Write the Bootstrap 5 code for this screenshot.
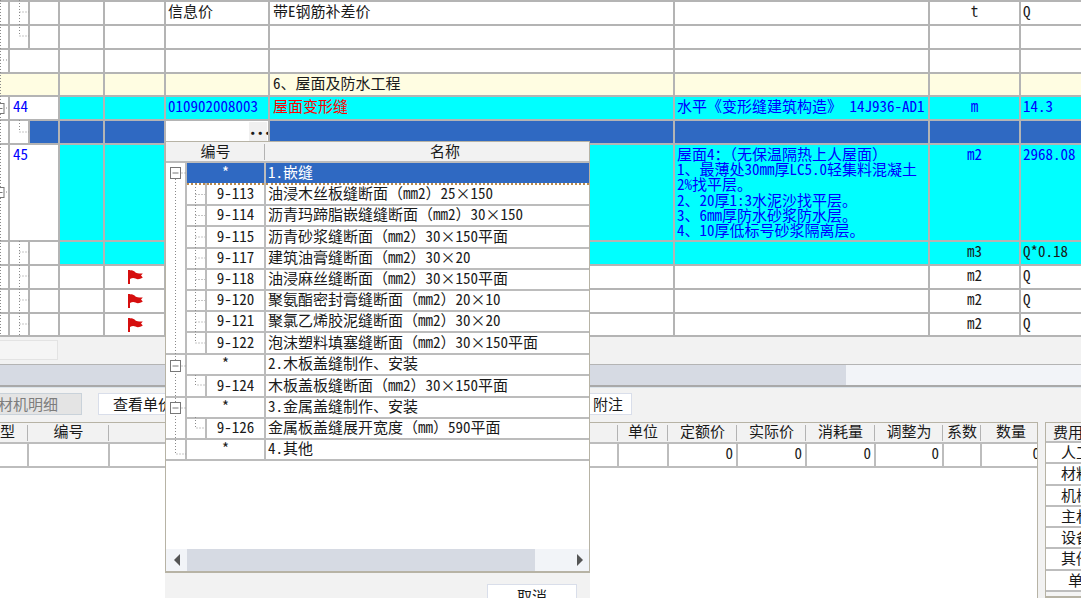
<!DOCTYPE html>
<html lang="zh">
<head>
<meta charset="utf-8">
<title>清单</title>
<link href="https://cdn.jsdelivr.net/npm/bootstrap@5.3.0/dist/css/bootstrap.min.css" rel="stylesheet">
<style>
html,body{margin:0;height:100%;overflow:hidden;background:#f2f2f2}
body{font-family:"Noto Sans CJK SC","Liberation Mono",monospace;font-size:15px;color:#1a1a1a;font-feature-settings:"hwid"}
.stage{position:relative;width:1081px;height:598px;overflow:hidden}
.fw{font-style:normal;font-feature-settings:"fwid"}
.sheet{table-layout:fixed;border-collapse:collapse;margin:0;--bs-table-bg:#fff;--bs-table-border-color:#b4b4b4;--bs-table-color:#1a1a1a;color:#1a1a1a}
.sheet>tbody>tr>td,.sheet>thead>tr>th{padding:0 2px 4px;line-height:18px;white-space:nowrap;overflow:hidden;font-weight:400;border:2px solid #b4b4b4;vertical-align:middle}
.main{width:1081px}
.main>tbody>tr{height:24px}
.main>tbody>tr.h23{height:23px}
.main>tbody>tr.h23>td{padding-bottom:3px}
.main>tbody>tr.tall{height:97px}
.main>tbody>tr>td:first-child{border-left:0}
.main>tbody>tr>td:last-child{border-right:0}
.main>tbody>tr>td.topped{vertical-align:top;padding-top:1px;padding-bottom:0;line-height:15.2px;white-space:pre-line}
.bg-c{--bs-table-bg:#00ffff}
.bg-s{--bs-table-bg:#2f69c2}
.bg-y{--bs-table-bg:#fffde2}
.tx-b{color:#0000ff!important}
.tx-r{color:#ff0000!important}
.nb{font-weight:600;padding-left:3px!important}
.pl{padding-left:3px!important}
.main>tbody>tr>td.inp{padding:0}
.browse{background:#f0f0f0;width:18px;height:20px;margin:0 1px 0 auto;font-weight:800;font-size:15px;line-height:14px;text-align:center}
.main>tbody>tr>td.flagc{padding:0}
.flagic{display:block;width:15px;height:14px;margin:0 0 0 23px}
.treeover{position:absolute;left:0;top:0;pointer-events:none}
.hscroll{height:27px;padding:3px 0 0}
.pager{width:58px;height:20px;background:#f5f5f5;border:1px solid #e3e3e3;border-left:0}
.bar{height:23px;background:#f2f4f8;border-top:1px solid #b4b4b4;border-bottom:2px solid #a9a9a9}
.thumb{width:846px;height:100%;background:#d6dae3}
.tools{height:35px;padding:5px 0 0;gap:16px;border-top:1px solid #dbe3ea}
.tbtn{height:22px;background:#fff;border:1px solid #d9deea;line-height:19px;padding:0 0 0 14px;white-space:nowrap}
.tbtn.off{width:85px;margin-left:-3px;background:#e4e4e4;color:#7d7d7d;border-color:#c9d2da;padding-left:0;overflow:hidden}
.tbtn.wide{width:90px;overflow:hidden}
.tbtn.note{width:92px;margin-left:336px;padding-left:52px}
.lower{height:178px}
.lowleft{width:1038px;height:100%;background:#fff;border-top:1px solid #b7b3a5;border-right:1px solid #b7b3a5;overflow:hidden}
.gap-7{width:7px}
.sheet.det{width:1037px;--bs-table-bg:#fff}
.det>tbody>tr>td{border:0;border-bottom:2px solid #bdbdbd;border-right:2px solid #bdbdbd;height:24px;padding:0 3px 4px 2px;text-align:right}
.det>thead>tr>th{background:#f2f2f2;border:0;border-bottom:2px solid #bdbdbd;height:20px;text-align:center;padding:0 0 3px;line-height:16px;background-image:linear-gradient(#b3b3b3,#b3b3b3);background-size:1px 16px;background-position:right center;background-repeat:no-repeat}
.det>thead>tr>th:last-child{background-image:none;padding-left:4px}
.det>thead>tr>th.cuttype{text-align:right;padding-right:18px}
.det>tbody>tr>td.cutnum{border-right:0;padding-right:0}
.cutnum span{display:inline-block;margin-right:-3px}
.fee{width:36px;height:176px;border-top:1px solid #b7b3a5;border-left:1px solid #b7b3a5;border-bottom:2px solid #b7b3a5;background:#f5f5f5;overflow:hidden}
.feeh,.feer{width:70px;white-space:nowrap;line-height:17px;border-bottom:2px solid #bdbdbd}
.feeh{height:20px;padding-left:7px;background:#f2f2f2}
.feer{height:21.3px;background:#fff;padding-left:15px}
.feer.sg{padding-left:22px}
.dlg{position:absolute;left:165px;top:141px;width:425px;height:457px;background:#f2f2f2;overflow:hidden}
.dframe{height:432px;background:#fff;border:1px solid #b7b3a5;border-bottom:2px solid #b7b3a5;position:relative}
.dhead{height:21px;background:#f2f2f2;border-bottom:2px solid #bcbcbc;line-height:18px}
.dh1{width:99px;text-align:center;background-image:linear-gradient(#b3b3b3,#b3b3b3);background-size:1px 16px;background-position:right center;background-repeat:no-repeat}
.dh2{flex:1;padding-left:165px}
.tree{width:423px}
.tree>tbody>tr{height:21px}
.tree>tbody>tr.rh22{height:22px}
.tree>tbody>tr>td{border:0;border-bottom:2px solid #bcbcbc;border-left:2px solid #bcbcbc;padding:0 2px 3px;line-height:16px}
.tree>tbody>tr>td.mid{text-align:center}
.tree>tbody>tr>td.gut{border-left:0;padding:0}
.tree>tbody>tr>td.sel{--bs-table-bg:#2f69c2;color:#fff;border-bottom:2px dotted #b98a4d}
.dbar{height:22px;background:#d6dae3;position:absolute;left:0;right:0;bottom:0}
.dend{width:21px;background:#f2f4f8}
.dendr{width:54px;background:#f2f4f8;justify-content:flex-end;padding-right:6px}
.tri{width:0;height:0;border-top:6px solid transparent;border-bottom:6px solid transparent}
.tri.l{border-right:6px solid #555}
.tri.r{border-left:6px solid #555}
.dcancel{width:90px;height:30px;margin:11px 13px 0 auto;background:#fff;border:1px solid #d9deea;text-align:center;line-height:18px;padding-top:2px}
</style>
</head>
<body>
<svg width="0" height="0" class="d-none"><defs>
<symbol id="flag" viewBox="0 0 15 14"><path fill="#d60f0f" d="M0 0h2v14H0zM2 .4C4.500-.2 6 1 7.500 2.400 9.500 3.600 12 3.600 14.800 3.400L13 5.600l1.800 2C12 9 10 9.800 7.500 8.600 5.500 7.600 3.800 8 2 9z"/></symbol>
</defs></svg>
<div class="stage">
<table class="table table-bordered sheet main">
<colgroup><col style="width:9px"><col style="width:20px"><col style="width:30px"><col style="width:45px"><col style="width:61px"><col style="width:104px"><col style="width:405px"><col style="width:255px"><col style="width:91px"><col style="width:61px"></colgroup>
<tbody>
<tr><td></td><td></td><td></td><td></td><td></td><td>信息价</td><td class="pl">带E钢筋补差价</td><td></td><td class="text-center">t</td><td>Q</td></tr>
<tr><td></td><td></td><td></td><td></td><td></td><td></td><td></td><td></td><td></td><td></td></tr>
<tr><td></td><td colspan="2"></td><td></td><td></td><td></td><td></td><td></td><td></td><td></td></tr>
<tr class="h23"><td colspan="3" class="bg-y"></td><td class="bg-y"></td><td class="bg-y"></td><td class="bg-y"></td><td class="bg-y pl">6、屋面及防水工程</td><td class="bg-y"></td><td class="bg-y"></td><td class="bg-y"></td></tr>
<tr><td></td><td colspan="2" class="tx-b nb">44</td><td class="bg-c"></td><td class="bg-c"></td><td class="bg-c tx-b">010902008003</td><td class="bg-c tx-r pl">屋面变形缝</td><td class="bg-c tx-b">水平<i class="fw">《</i>变形缝建筑构造<i class="fw">》</i> 14J936-AD1</td><td class="bg-c tx-b text-center">m</td><td class="bg-c tx-b">14.3</td></tr>
<tr><td></td><td></td><td class="bg-s"></td><td class="bg-s"></td><td class="bg-s"></td><td class="inp"><div class="d-flex align-items-center"><div class="browse">...</div></div></td><td class="bg-s"></td><td class="bg-s"></td><td class="bg-s"></td><td class="bg-s"></td></tr>
<tr class="tall"><td></td><td colspan="2" class="tx-b nb topped">45</td><td class="bg-c"></td><td class="bg-c"></td><td class="bg-c"></td><td class="bg-c"></td><td class="bg-c tx-b topped">屋面4<i class="fw">：（</i>无保温隔热上人屋面<i class="fw">）</i>
1、最薄处30mm厚LC5.0轻集料混凝土
2%找平层。
2、20厚1:3水泥沙找平层。
3、6mm厚防水砂浆防水层。
4、10厚低标号砂浆隔离层。</td><td class="bg-c tx-b text-center topped">m2</td><td class="bg-c tx-b topped">2968.08</td></tr>
<tr><td></td><td></td><td></td><td class="bg-c"></td><td class="bg-c"></td><td class="bg-c"></td><td class="bg-c"></td><td class="bg-c"></td><td class="bg-c text-center">m3</td><td class="bg-c">Q*0.18</td></tr>
<tr><td></td><td></td><td></td><td></td><td class="flagc"><svg class="flagic"><use href="#flag"/></svg></td><td></td><td></td><td></td><td class="text-center">m2</td><td>Q</td></tr>
<tr><td></td><td></td><td></td><td></td><td class="flagc"><svg class="flagic"><use href="#flag"/></svg></td><td></td><td></td><td></td><td class="text-center">m2</td><td>Q</td></tr>
<tr class="h23"><td></td><td></td><td></td><td></td><td class="flagc"><svg class="flagic"><use href="#flag"/></svg></td><td></td><td></td><td></td><td class="text-center">m2</td><td>Q</td></tr>
</tbody></table>
<svg class="treeover" width="30" height="336" fill="none" stroke="#8a8a8a" stroke-dasharray="1 2">
<path d="M.5 0V335M19.5 0V36H29M19.5 12H29M0 60H9M0 108H9M19.5 120V132H29M0 192H9M19.5 241V335M19.5 252H29M19.5 276H29M19.5 300H29M19.5 324H29"/>
<g stroke="#777" stroke-dasharray="none" fill="#fff"><rect x="-5" y="103.500" width="9" height="10"/><rect x="-5" y="187.500" width="9" height="10"/><path d="M-3 108.500H2.500M-3 192.500H2.500"/></g>
</svg>

<div class="hscroll"><div class="pager"></div></div>
<div class="bar"><div class="thumb"></div></div>
<div class="tools d-flex">
<div class="tbtn off">材机明细</div>
<div class="tbtn wide">查看单价构成</div>
<div class="tbtn note">附注</div>
</div>
<div class="lower d-flex">
<div class="lowleft">
<table class="table sheet det">
<colgroup><col style="width:28px"><col style="width:81px"><col style="width:509px"><col style="width:50px"><col style="width:69px"><col style="width:69px"><col style="width:69px"><col style="width:68px"><col style="width:38px"><col style="width:56px"></colgroup>
<thead><tr><th class="cuttype">型</th><th>编号</th><th></th><th>单位</th><th>定额价</th><th>实际价</th><th>消耗量</th><th>调整为</th><th>系数</th><th>数量</th></tr></thead>
<tbody><tr><td></td><td></td><td></td><td></td><td>0</td><td>0</td><td>0</td><td>0</td><td></td><td class="cutnum"><span>0</span></td></tr></tbody>
</table>
</div>
<div class="gap-7"></div>
<div class="fee">
<div class="feeh">费用</div>
<div class="feer">人工</div><div class="feer">材料</div><div class="feer">机械</div><div class="feer">主材</div><div class="feer">设备</div><div class="feer">其他</div><div class="feer sg">单价</div>
</div>
</div>

<div class="dlg">
<div class="dframe">
<div class="dhead d-flex"><div class="dh1">编号</div><div class="dh2">名称</div></div>
<table class="table sheet tree">
<colgroup><col style="width:20px"><col style="width:20px"><col style="width:59px"><col style="width:324px"></colgroup>
<tbody>
<tr><td rowspan="9" class="gut"></td><td colspan="2" class="mid sel">*</td><td class="sel">1.嵌缝</td></tr>
<tr><td></td><td class="mid">9-113</td><td>油浸木丝板缝断面<i class="fw">（</i>mm2<i class="fw">）</i>25<i class="fw">×</i>150</td></tr>
<tr><td></td><td class="mid">9-114</td><td>沥青玛蹄脂嵌缝缝断面<i class="fw">（</i>mm2<i class="fw">）</i>30<i class="fw">×</i>150</td></tr>
<tr class="rh22"><td></td><td class="mid">9-115</td><td>沥青砂浆缝断面<i class="fw">（</i>mm2<i class="fw">）</i>30<i class="fw">×</i>150平面</td></tr>
<tr><td></td><td class="mid">9-117</td><td>建筑油膏缝断面<i class="fw">（</i>mm2<i class="fw">）</i>30<i class="fw">×</i>20</td></tr>
<tr><td></td><td class="mid">9-118</td><td>油浸麻丝缝断面<i class="fw">（</i>mm2<i class="fw">）</i>30<i class="fw">×</i>150平面</td></tr>
<tr><td></td><td class="mid">9-120</td><td>聚氨酯密封膏缝断面<i class="fw">（</i>mm2<i class="fw">）</i>20<i class="fw">×</i>10</td></tr>
<tr><td></td><td class="mid">9-121</td><td>聚氯乙烯胶泥缝断面<i class="fw">（</i>mm2<i class="fw">）</i>30<i class="fw">×</i>20</td></tr>
<tr class="rh22"><td></td><td class="mid">9-122</td><td>泡沫塑料填塞缝断面<i class="fw">（</i>mm2<i class="fw">）</i>30<i class="fw">×</i>150平面</td></tr>
<tr><td rowspan="2" class="gut"></td><td colspan="2" class="mid">*</td><td>2.木板盖缝制作、安装</td></tr>
<tr class="rh22"><td></td><td class="mid">9-124</td><td>木板盖板缝断面<i class="fw">（</i>mm2<i class="fw">）</i>30<i class="fw">×</i>150平面</td></tr>
<tr><td rowspan="2" class="gut"></td><td colspan="2" class="mid">*</td><td>3.金属盖缝制作、安装</td></tr>
<tr><td></td><td class="mid">9-126</td><td>金属板盖缝展开宽度<i class="fw">（</i>mm<i class="fw">）</i>590平面</td></tr>
<tr><td class="gut"></td><td colspan="2" class="mid">*</td><td>4.其他</td></tr>
</tbody></table>
<svg class="treeover" width="42" height="320" fill="none" stroke="#8a8a8a" stroke-dasharray="1 2">
<path d="M9.500 31V312H20M9.500 31H20M9.500 224H20M9.500 266H20M29.500 42V201H39M29.500 52.500H39M29.500 73.500H39M29.500 95H39M29.500 116H39M29.500 137.500H39M29.500 158.500H39M29.500 180H39M29.500 233V243H39M29.500 275V286H39"/>
<g stroke="#777" stroke-dasharray="none" fill="#fff"><rect x="4.500" y="25.500" width="10" height="11"/><rect x="4.500" y="218.500" width="10" height="11"/><rect x="4.500" y="260.500" width="10" height="11"/><path d="M6.500 31H12.500M6.500 224H12.500M6.500 266H12.500"/></g>
</svg>
<div class="dbar d-flex"><div class="dend d-flex align-items-center justify-content-center"><div class="tri l"></div></div><div class="flex-grow-1"></div><div class="dendr d-flex align-items-center"><div class="tri r"></div></div></div>
</div>
<div class="dcancel">取消</div>
</div>
</div>
</body>
</html>
